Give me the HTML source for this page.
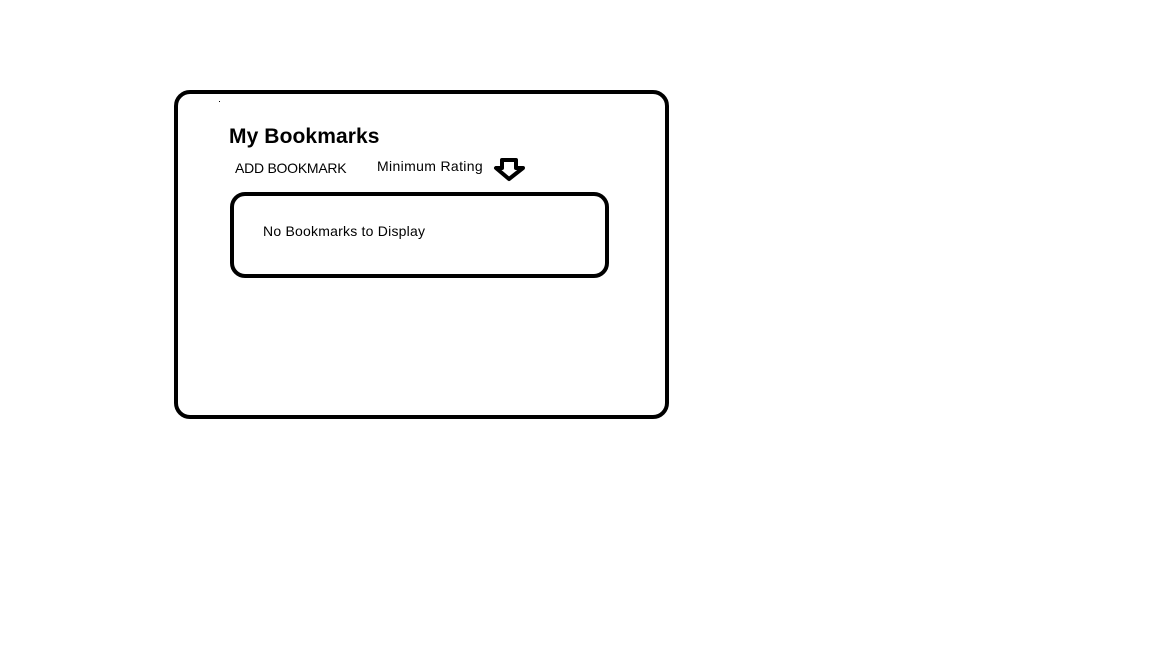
<!DOCTYPE html>
<html><head><style>
body{margin:0;width:1152px;height:648px;background:#fff;position:relative;overflow:hidden;font-family:"Liberation Sans",sans-serif;color:#000}
.b{position:absolute;border:4px solid #000;box-sizing:border-box}
.t{position:absolute;white-space:nowrap}
</style></head><body>
<div class="b" style="left:174px;top:90px;width:495px;height:329px;border-radius:16px"></div>
<div class="b" style="left:230px;top:192px;width:379px;height:86px;border-radius:15px"></div>
<div style="position:absolute;left:219px;top:101px;width:1px;height:1px;background:#000"></div>
<div class="t" style="left:229px;top:125px;font-size:21px;font-weight:bold;letter-spacing:0.1px">My Bookmarks</div>
<div class="t" style="left:235px;top:160px;font-size:14px;letter-spacing:-0.25px">ADD BOOKMARK</div>
<div class="t" style="left:377px;top:158px;font-size:14px;letter-spacing:0.35px">Minimum Rating</div>
<svg style="position:absolute;left:493px;top:157px" width="34" height="25"><path d="M9 3H23V11H30L16 22L3 11H9Z" fill="#fff" stroke="#000" stroke-width="4" stroke-linejoin="round"/></svg>
<div class="t" style="left:263px;top:223px;font-size:14px;letter-spacing:0.22px">No Bookmarks to Display</div>
</body></html>
